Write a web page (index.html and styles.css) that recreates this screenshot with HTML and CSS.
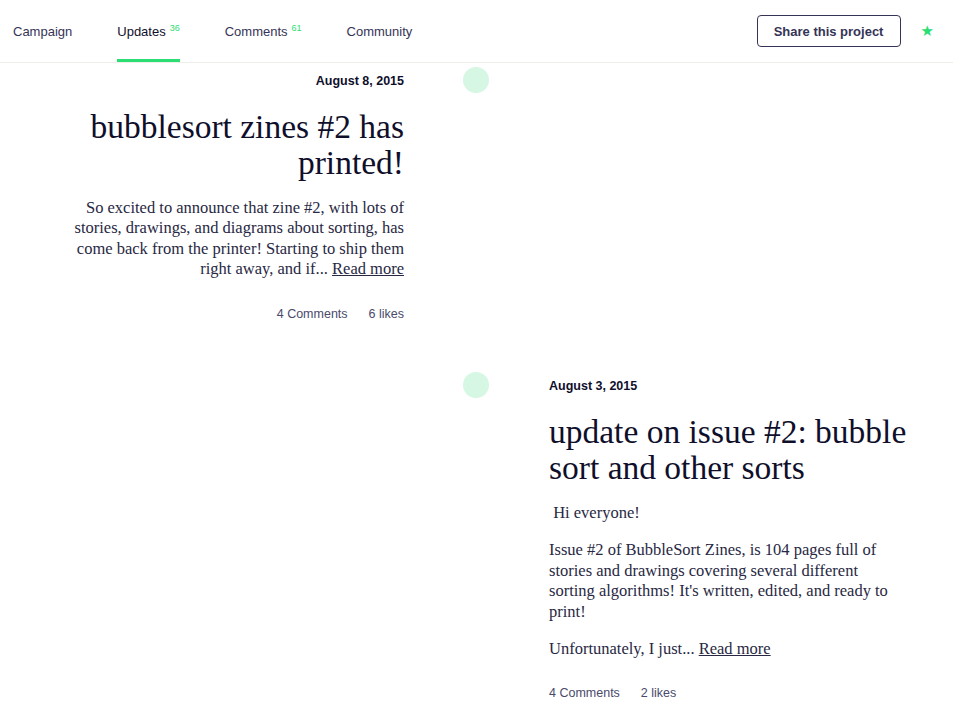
FILE: index.html
```html
<!DOCTYPE html>
<html>
<head>
<meta charset="utf-8">
<link rel="stylesheet" href="styles.css">
</head>
<body>
<header class="topbar">
  <nav class="tabs">
    <a class="tab">Campaign</a>
    <a class="tab active">Updates <sup class="count">36</sup></a>
    <a class="tab">Comments <sup class="count">61</sup></a>
    <a class="tab">Community</a>
  </nav>
  <div class="actions">
    <button class="share">Share this project</button>
    <span class="star">&#9733;</span>
  </div>
</header>

<main class="timeline">
  <article class="row left">
    <div class="post">
      <div class="date">August 8, 2015</div>
      <h2 class="title">bubblesort zines #2 has printed!</h2>
      <div class="body">
        <p>So excited to announce that zine #2, with lots of stories, drawings, and diagrams about sorting, has come back from the printer! Starting to ship them right away, and if... <a class="more">Read more</a></p>
      </div>
      <div class="meta"><span>4 Comments</span><span>6 likes</span></div>
    </div>
    <div class="axis"><span class="dot"></span></div>
    <div></div>
  </article>

  <article class="row right">
    <div></div>
    <div class="axis"><span class="dot"></span></div>
    <div class="post">
      <div class="date">August 3, 2015</div>
      <h2 class="title">update on issue #2: bubble sort and other sorts</h2>
      <div class="body">
        <p>&nbsp;Hi everyone!</p>
        <p>Issue #2 of BubbleSort Zines, is 104 pages full of stories and drawings covering several different sorting algorithms! It's written, edited, and ready to print!</p>
        <p>Unfortunately, I just... <a class="more">Read more</a></p>
      </div>
      <div class="meta"><span>4 Comments</span><span>2 likes</span></div>
    </div>
  </article>
</main>
</body>
</html>
```

FILE: styles.css
```css
* { box-sizing: border-box; }
html, body { margin: 0; padding: 0; background: #fff; }
body {
  font-family: "Liberation Sans", Arial, sans-serif;
  color: #282843;
  width: 953px;
  overflow: hidden;
}

.topbar {
  height: 63px;
  border-bottom: 1px solid #efefe9;
  display: flex;
  justify-content: space-between;
  align-items: stretch;
  padding: 0 0 0 13px;
}
.tabs { display: flex; }
.tab {
  font-size: 13px;
  color: #353456;
  display: flex;
  align-items: center;
  height: 62px;
  padding-top: 4px;
  margin-right: 45px;
  border-bottom: 3px solid transparent;
}
.tab.active {
  color: #0f0f2b;
  border-bottom-color: #2bde73;
}
.count {
  font-size: 9px;
  color: #2bde73;
  margin-left: 4px;
  position: relative;
  top: -4px;
}
.actions {
  display: flex;
  align-items: center;
  height: 62px;
}
.share {
  font-family: "Liberation Sans", Arial, sans-serif;
  font-weight: bold;
  font-size: 13px;
  color: #353456;
  background: #fff;
  border: 1px solid #353456;
  border-radius: 4px;
  width: 144px;
  height: 32px;
  margin-right: 20px;
}
.star {
  color: #2bde73;
  font-size: 15px;
  margin-right: 19px;
  font-family: "DejaVu Sans", sans-serif;
}

.timeline { display: flex; flex-direction: column; }
.row {
  display: grid;
  grid-template-columns: 404px 145px 404px;
}
.row.left { padding-top: 4px; height: 305px; }
.row.right { padding-top: 4px; }

.axis { display: flex; justify-content: center; }
.dot {
  width: 26px;
  height: 26px;
  border-radius: 50%;
  background: #d5f7e3;
  transform: translateX(-1px);
}

.post { width: 356px; }
.row.left .post { justify-self: end; text-align: right; }
.date {
  font-weight: bold;
  font-size: 12.5px;
  color: #0f0f2b;
  line-height: 16px;
  margin-top: 6px;
}
.title {
  font-family: "Liberation Serif", "Times New Roman", serif;
  font-weight: normal;
  font-size: 33.5px;
  line-height: 36px;
  color: #0f0f2b;
  margin: 20px 0 17px;
}
.row.left .title { margin-left: -8px; }
.row.right .title { margin-right: -8px; }
.body {
  font-family: "Liberation Serif", "Times New Roman", serif;
  font-size: 16.5px;
  line-height: 20.4px;
  color: #282843;
}
.body p { margin: 0 0 17px; }
.more { color: #282843; text-decoration: underline; }
.meta {
  font-size: 12.5px;
  color: #4a4a6c;
  display: flex;
  gap: 21px;
  margin-top: 27px;
}
.row.left .meta { justify-content: flex-end; }
```
